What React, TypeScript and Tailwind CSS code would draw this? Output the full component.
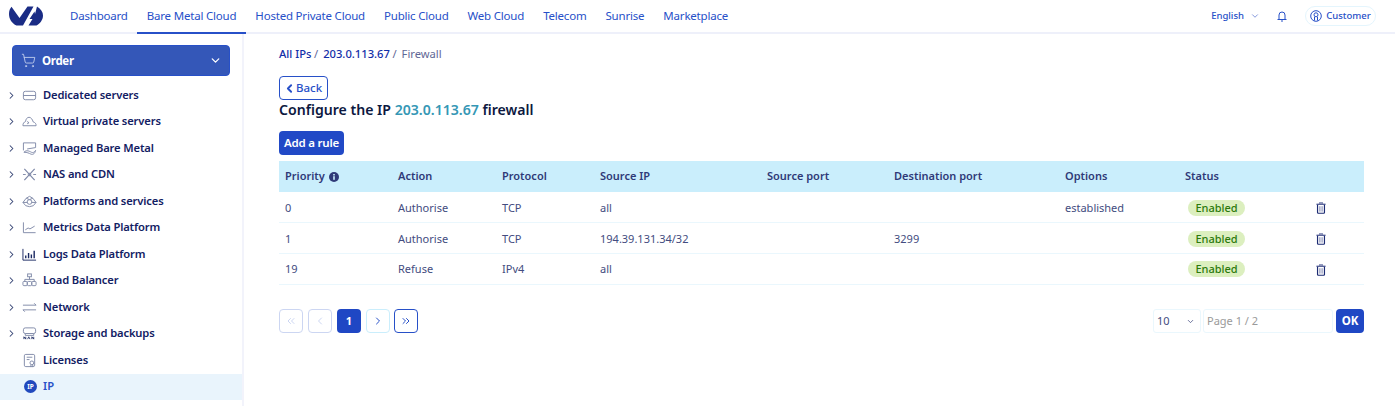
import React from "react";
import { ChevronDown, ChevronRight, ChevronLeft, ChevronsLeft, ChevronsRight, ShoppingCart } from "lucide-react";

const topNav: [string, boolean][] = [
  ["Dashboard", false], ["Bare Metal Cloud", true], ["Hosted Private Cloud", false], ["Public Cloud", false],
  ["Web Cloud", false], ["Telecom", false], ["Sunrise", false], ["Marketplace", false],
];

function Ic({ children }: { children: React.ReactNode }) {
  return (
    <svg viewBox="0 0 16 16" width="15" height="15" fill="none" stroke="#7f89a8" strokeWidth="1" className="shrink-0">
      {children}
    </svg>
  );
}

const sideItems: { label: string; arrow: boolean; icon: React.ReactNode }[] = [
  { label: "Dedicated servers", arrow: true, icon: <Ic><rect x="1.500" y="3.500" width="13" height="9" rx="2" /><path d="M1.500 8h13" /></Ic> },
  { label: "Virtual private servers", arrow: true, icon: <Ic><path d="M1 12.500h14c.3-2-1-3.500-3-4C11 5.500 9.500 3.500 7.500 3.500 5.500 3.500 4 5.500 3.800 8 2 8.500.8 10.500 1 12.500z" /><path d="M5.500 8l2 1.300-2 1.200" /></Ic> },
  { label: "Managed Bare Metal", arrow: true, icon: <Ic><path d="M1.500 2h13v5l-9 1.500" /><path d="M1.500 2v8" /><path d="M2 12c3-3 6-1 8 0 2 .800 3 0 4.500-2-.500 3-2.500 5-5 4-2-1-4-2-7.500-2z" /></Ic> },
  { label: "NAS and CDN", arrow: true, icon: <Ic><path d="M2.500 2l11 12M13.500 2l-11 12" strokeWidth="1.300" /><path d="M1 8h3M12 8h3" /><circle cx="8" cy="8" r="1.300" /></Ic> },
  { label: "Platforms and services", arrow: true, icon: <Ic><path d="M1 9l3.500-4.500L8 2.500l3.500 2L15 9l-3 3.500-4 1-4-1z" /><circle cx="8" cy="8.500" r="2.500" /><path d="M4.500 4.500L8 6l3.500-1.500M1 9h4.500M10.500 9H15" /></Ic> },
  { label: "Metrics Data Platform", arrow: true, icon: <Ic><path d="M1.500 2.500v11h13" /><path d="M3.500 10.500l3-2 2 1 5-3" /></Ic> },
  { label: "Logs Data Platform", arrow: true, icon: <svg viewBox="0 0 16 16" width="15" height="15" fill="none" stroke="#1b2a63" strokeWidth="1.500" className="shrink-0"><path d="M1 2v12h14" strokeWidth="1" /><path d="M4 12V9M7 12V6.500M10 12V8M13 12V4" /></svg> },
  { label: "Load Balancer", arrow: true, icon: <Ic><rect x="6" y="1" width="4" height="3" /><path d="M8 4v3M3 9V6.800h10V9" /><rect x="1" y="9" width="4.500" height="4.500" rx="1" /><rect x="5.750" y="9" width="4.500" height="4.500" rx="1" /><rect x="10.500" y="9" width="4.500" height="4.500" rx="1" /></Ic> },
  { label: "Network", arrow: true, icon: <Ic><path d="M1 5.500h14M13 3.500l2 2M15 10.500H1M3 12.500l-2-2" /></Ic> },
  { label: "Storage and backups", arrow: true, icon: <Ic><rect x="1.500" y="2" width="13" height="6" rx="2" /><path d="M3.500 8v2h9V8" /><path d="M2 14v-2.500l2 2.500v-2.500M6 14l1.200-2.500L8.500 14M10.500 14v-2.500l2 2.500v-2.500" strokeWidth=".9" stroke="#1b2a63" /></Ic> },
  { label: "Licenses", arrow: false, icon: <Ic><rect x="2.500" y="1.500" width="11" height="13" rx="1.500" /><path d="M5 4.500h6M5 7h3" /><circle cx="10.500" cy="10.500" r="2" /><path d="M9.500 12.500V15M11.500 12.500V15" /></Ic> },
];

const rows = [
  ["0", "Authorise", "TCP", "all", "", "", "established"],
  ["1", "Authorise", "TCP", "194.39.131.34/32", "", "3299", ""],
  ["19", "Refuse", "IPv4", "all", "", "", ""],
];

const thCls = "text-left font-semibold px-[6px] align-middle";
const tdCls = "px-[6px] pt-[2px] align-middle";

function TrashIcon() {
  return (
    <svg viewBox="0 0 11 13" width="10" height="12" fill="none" stroke="#1b2a72" strokeWidth="1.300">
      <path d="M4 1.700V.900h3v.800" stroke="#6f78a8" />
      <path d="M.500 2.400h10" stroke="#4a5590" strokeWidth="1.400" />
      <path d="M1.700 2.800v8.700c0 .500.300.800.800.800h6c.500 0 .800-.300.800-.800V2.800" />
      <path d="M4.300 4.500v6M6.700 4.500v6" stroke="#6f78a8" strokeWidth="1" />
    </svg>
  );
}

export default function App() {
  return (
    <div className="w-[1395px] h-[406px] overflow-hidden bg-white text-[12px] font-['Noto_Sans',sans-serif]">
      <header className="h-[34px] flex items-center justify-between border-b-2 border-[#eef0fa]">
        <div className="flex items-center h-full">
          <svg viewBox="0 0 34 20" width="34" height="20" className="ml-[9px] mr-[17.500px] -mt-[1px]">
            <path fill="#1a2c85" d="M2.500 0.800 L10.500 12 L18.500 0.500 L24.500 0.500 L14 19.500 L7.500 19.500 C3 17.500 0 13 0 8 C0 5 1 2.500 2.500 0.800 Z" />
            <path fill="#1a2c85" d="M28 0.500 C32 3 34 6 34 9.500 C34 14 31 17.500 27.500 19.500 L19.500 19.500 L23.500 13 L20.500 13 L25.500 5.500 L26 8 Z" />
          </svg>
          {topNav.map(([t, a]) => (
            <div key={t} className={`h-[34px] px-[9.500px] flex items-center whitespace-nowrap text-[#2750c8] text-[11.500px] tracking-[-0.2px] -mb-[2px] border-b-2 ${a ? "border-[#2750c8]" : "border-transparent"}`}>
              {t}
            </div>
          ))}
        </div>
        <div className="flex items-center text-[#2750c8] text-[9.500px] font-medium pr-[19px]">
          <span>English</span>
          <ChevronDown size={10} className="ml-[6px] text-[#6f86d6]" />
          <svg viewBox="0 0 12 12" width="12" height="12" fill="none" stroke="#2750c8" strokeWidth="1" className="ml-[16px]">
            <path d="M1.500 9.500h9M3 9.500V5a3 3 0 0 1 6 0v4.500M5 11h2" />
          </svg>
          <div className="ml-[17px] h-[20px] w-[71px] rounded-full border border-[#e4f5fd] flex items-center justify-center gap-[4px]">
            <svg viewBox="0 0 12 12" width="12" height="12" fill="none" stroke="#2750c8" strokeWidth="1" className="shrink-0">
              <circle cx="6" cy="6" r="5.300" />
              <circle cx="6" cy="4.800" r="2" />
              <path d="M4.500 7v3.500M7.500 7v3.500" />
            </svg>
            <span>Customer</span>
          </div>
        </div>
      </header>
      <div className="flex h-[372px]">
        <aside className="w-[244px] shrink-0 border-r-2 border-[#f2f3fb] pt-[11px]">
          <div className="mx-[12px] h-[31px] rounded-[4px] bg-[#3457b8] border border-[#2750c8] text-white flex items-center pl-[8px] pr-[7px] mb-[6px]">
            <ShoppingCart size={15} className="text-[#c5d0ee]" strokeWidth={1.4} />
            <span className="ml-[6px] font-bold text-[11.500px] tracking-[-0.3px]">Order</span>
            <ChevronDown size={13} strokeWidth={2.4} className="ml-auto" />
          </div>
          {sideItems.map((s) => (
            <div key={s.label} className="h-[26.500px] flex items-center pl-[6px] text-[#122063] font-semibold text-[11.200px] tracking-[-0.14px] whitespace-nowrap">
              <span className="w-[16px] shrink-0">{s.arrow && <ChevronRight size={11} strokeWidth={2.2} className="text-[#2f3e70]" />}</span>
              {s.icon}
              <span className="ml-[6px]">{s.label}</span>
            </div>
          ))}
          <div className="h-[26px] flex items-center pl-[24px] bg-[#e9f4fc] text-[#2750c8] font-semibold text-[11.200px]">
            <span className="w-[13px] h-[13px] rounded-full bg-[#2149bd] text-white text-[6.500px] font-bold flex items-center justify-center shrink-0">IP</span>
            <span className="ml-[6px]">IP</span>
          </div>
        </aside>
        <main className="flex-1 pl-[35px] pr-[31px] pt-[13px] text-[#434c80]">
          <div className="flex items-center h-[14px] text-[11.200px] whitespace-nowrap">
            <span className="text-[#122ea8] font-medium">All IPs</span><span className="ml-[2.500px] text-[#5f6896]">/</span>
            <span className="ml-[5px] text-[#122ea8] font-medium">203.0.113.67</span><span className="ml-[2.500px] text-[#5f6896]">/</span>
            <span className="ml-[5px] text-[#5f6896]">Firewall</span>
          </div>
          <button className="mt-[15px] h-[24px] w-[48.500px] flex items-center pl-[4px] rounded-[4px] border border-[#2750c8] text-[#2750c8] text-[11.500px] font-medium bg-white">
            <ChevronLeft size={13} strokeWidth={3.500} className="-ml-[1px]" />
            <span>Back</span>
          </button>
          <h1 className="mt-[0px] h-[20px] leading-[20px] text-[14.100px] font-semibold text-[#0c1840] whitespace-nowrap">
            Configure the IP <span className="text-[#3597b5]">203.0.113.67</span> firewall
          </h1>
          <button className="mt-[11px] h-[24px] w-[65px] block rounded-[4px] bg-[#2149c6] text-white text-[11.500px] font-semibold tracking-[-0.2px]">Add a rule</button>
          <table className="mt-[6px] w-[1085px] table-fixed border-collapse text-[11px] text-[#434c80]">
            <colgroup>
              <col className="w-[113px]" /><col className="w-[104px]" /><col className="w-[98px]" /><col className="w-[167px]" /><col className="w-[127px]" /><col className="w-[171px]" /><col className="w-[120px]" /><col className="w-[130px]" /><col />
            </colgroup>
            <thead>
              <tr className="h-[31px] bg-[#caeefc] text-[#2f3a78]">
                <th className={thCls}>
                  <span className="inline-flex items-center gap-[4px]">Priority
                    <svg viewBox="0 0 10 10" width="10" height="10"><circle cx="5" cy="5" r="5" fill="#2f3a78" /><rect x="4.200" y="4.200" width="1.600" height="3.600" fill="#caeefc" /><rect x="4.200" y="2" width="1.600" height="1.500" fill="#caeefc" /></svg>
                  </span>
                </th>
                {["Action", "Protocol", "Source IP", "Source port", "Destination port", "Options", "Status", ""].map((h, i) => <th key={i} className={thCls}>{h}</th>)}
              </tr>
            </thead>
            <tbody>
              {rows.map((r, i) => (
                <tr key={i} className="h-[30.700px] border-b border-[#eaf7fd]">
                  {r.map((c, j) => <td key={j} className={tdCls}>{c}</td>)}
                  <td className="pl-[9px] pt-[2px] align-middle">
                    <span className="inline-block w-[57px] text-center h-[16px] leading-[16px] rounded-full bg-[#dcefbf] text-[#2c7a0c] font-medium text-[11px]">Enabled</span>
                  </td>
                  <td className="pl-[7px] pt-[2px] align-middle"><span className="flex"><TrashIcon /></span></td>
                </tr>
              ))}
            </tbody>
          </table>
          <div className="mt-[24.500px] w-[1085px] flex items-center">
            <div className="flex items-center gap-[5px]">
              <span className="w-[24px] h-[24px] rounded-[4px] border border-[#ccd6f2] flex items-center justify-center text-[#ccd6f2]"><ChevronsLeft size={12} strokeWidth={2} /></span>
              <span className="w-[24px] h-[24px] rounded-[4px] border border-[#ccd6f2] flex items-center justify-center text-[#ccd6f2]"><ChevronLeft size={12} strokeWidth={2} /></span>
              <span className="w-[24px] h-[24px] rounded-[4px] bg-[#1f47c4] text-white font-bold text-[11px] flex items-center justify-center">1</span>
              <span className="w-[24px] h-[24px] rounded-[4px] border border-[#caeefc] flex items-center justify-center text-[#2750c8]"><ChevronRight size={12} strokeWidth={2} /></span>
              <span className="w-[24px] h-[24px] -ml-[1px] rounded-[4px] border border-[#2750c8] flex items-center justify-center text-[#2750c8]"><ChevronsRight size={12} strokeWidth={2} /></span>
            </div>
            <div className="ml-auto flex items-center gap-[2px]">
              <div className="w-[48px] h-[24px] border border-[#eaf7fd] rounded-[3px] flex items-center justify-between pl-[3px] pr-[5px] text-[11px] text-[#434c80]">
                <span>10</span><ChevronDown size={9} />
              </div>
              <div className="w-[130px] h-[24px] border border-[#eaf7fd] rounded-[3px] flex items-center pl-[3px] text-[11px] text-[#9a9a9a]">Page 1 / 2</div>
              <button className="ml-[1px] w-[28px] h-[24px] rounded-[4px] bg-[#1f47c4] text-white font-bold text-[11.500px]">OK</button>
            </div>
          </div>
        </main>
      </div>
    </div>
  );
}
